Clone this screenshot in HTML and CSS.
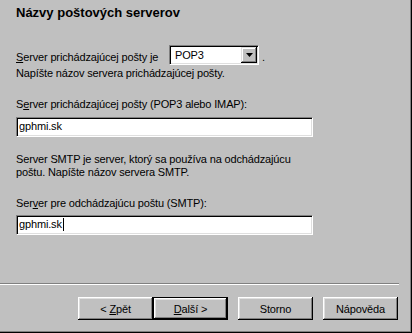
FILE: index.html
```html
<!DOCTYPE html>
<html lang="sk">
<head>
    <meta charset="UTF-8">
    <title>Názvy poštových serverov</title>
    <link rel="stylesheet" href="styles.css">
</head>
<body>
    <div class="dialog">
        <div class="content">
            <h1 class="title">Názvy poštových serverov</h1>

            <div class="combo-row">
                <span class="combo-label"><u>S</u>erver prichádzajúcej pošty je</span>
                <div class="combo">
                    <span class="combo-value">POP3</span>
                    <span class="combo-btn">
                        <svg width="7" height="4" viewBox="0 0 7 4"><path d="M0 0H7L3.5 4Z" fill="#000"/></svg>
                    </span>
                </div>
                <span class="combo-dot">.</span>
            </div>
            <div class="hint">Napíšte názov servera prichádzajúcej pošty.</div>

            <div class="label label-in">S<u>e</u>rver prichádzajúcej pošty (POP3 alebo IMAP):</div>
            <div class="edit edit-in">gphmi.sk</div>

            <div class="para">Server SMTP je server, ktorý sa používa na odchádzajúcu<br>poštu. Napíšte názov servera SMTP.</div>

            <div class="label label-out">Ser<u>v</u>er pre odchádzajúcu poštu (SMTP):</div>
            <div class="edit edit-out">gphmi.sk<span class="caret"></span></div>
        </div>

        <div class="separator"></div>

        <div class="footer">
            <button class="btn">&lt; <u>Z</u>pět</button>
            <button class="btn btn-default"><u>D</u>alší &gt;</button>
            <button class="btn btn-gap">Storno</button>
            <button class="btn btn-gap">Nápověda</button>
        </div>
    </div>
</body>
</html>
```

FILE: styles.css
```css
body {
    margin: 0;
    font-family: "Liberation Sans", Arial, sans-serif;
    font-size: 11px;
    color: #000;
    background: #c0c0c0;
}
.dialog {
    width: 412px;
    height: 333px;
    box-sizing: border-box;
    background: #c0c0c0;
    border-right: 1px solid #000;
    border-bottom: 1px solid #000;
    box-shadow: inset -1px -1px 0 #808080;
    display: flex;
    flex-direction: column;
}
.content {
    flex: 1;
    padding: 5px 0 0 16px;
    line-height: 13px;
    letter-spacing: -0.15px;
}
.title {
    margin: 0;
    font-size: 13px;
    font-weight: bold;
    line-height: 16px;
    letter-spacing: 0;
}
.combo-row {
    display: flex;
    align-items: flex-end;
    margin-top: 24px;
    height: 20px;
}
.combo-label {
    width: 153px;
    padding-bottom: 1px;
}
.combo-dot {
    margin-left: 3px;
    padding-bottom: 1px;
}
.combo {
    display: flex;
    width: 90px;
    height: 20px;
    box-sizing: border-box;
    padding: 1px;
    background: #fff;
    border: 1px solid;
    border-color: #808080 #fff #fff #808080;
    box-shadow: inset 1px 1px 0 #000, inset -1px -1px 0 #dfdfdf;
}
.combo-value {
    flex: 1;
    padding-left: 4px;
    line-height: 16px;
}
.combo-btn {
    width: 16px;
    height: 16px;
    display: flex;
    align-items: center;
    justify-content: center;
    background: #c0c0c0;
    box-shadow: inset -1px -1px 0 #000, inset 1px 1px 0 #dfdfdf, inset -2px -2px 0 #808080, inset 2px 2px 0 #fff;
}
.combo-btn svg {
    display: block;
}
.hint {
    margin-top: 2px;
}
.label-in {
    margin-top: 18px;
}
.label-out {
    margin-top: 18px;
}
.edit {
    width: 297px;
    height: 20px;
    box-sizing: border-box;
    padding: 0 2px;
    line-height: 16px;
    background: #fff;
    border: 1px solid;
    border-color: #808080 #fff #fff #808080;
    box-shadow: inset 1px 1px 0 #000, inset -1px -1px 0 #dfdfdf;
    white-space: nowrap;
}
.edit-in {
    margin-top: 6px;
}
.edit-out {
    margin-top: 5px;
}
.caret {
    display: inline-block;
    width: 1px;
    height: 13px;
    margin-left: 1px;
    background: #000;
    vertical-align: -3px;
}
.para {
    margin-top: 16px;
}
.separator {
    width: 399px;
    border-top: 1px solid #808080;
    border-bottom: 1px solid #fff;
}
.footer {
    display: flex;
    justify-content: flex-end;
    padding: 12px 13px 12px 0;
}
.btn {
    width: 75px;
    height: 23px;
    padding: 0;
    border: none;
    margin: 0;
    background: #c0c0c0;
    font-family: "Liberation Sans", Arial, sans-serif;
    font-size: 11px;
    letter-spacing: -0.15px;
    color: #000;
    box-shadow: inset -1px -1px 0 #000, inset 1px 1px 0 #fff, inset -2px -2px 0 #808080, inset 2px 2px 0 #dfdfdf;
}
.btn-default {
    box-shadow: inset 0 0 0 1px #000, inset -2px -2px 0 #000, inset 2px 2px 0 #fff, inset -3px -3px 0 #808080, inset 3px 3px 0 #dfdfdf;
}
.btn-gap {
    margin-left: 10px;
}
```
